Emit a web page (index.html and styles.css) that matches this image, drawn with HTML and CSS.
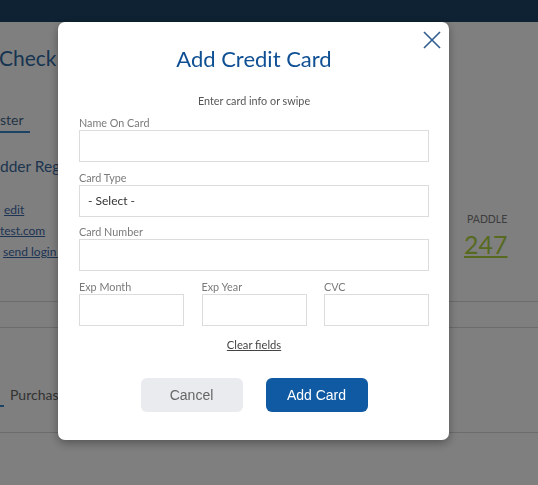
FILE: index.html
```html
<!DOCTYPE html>
<html lang="en">
<head>
    <meta charset="UTF-8">
    <title>Add Credit Card</title>
    <link rel="stylesheet" href="styles.css">
</head>
<body>
    <div class="page">
        <header class="topbar"></header>
        <div class="summary">
            <div class="summary-main">
                <h1 class="page-title">Check I</h1>
                <div class="tab-row">
                    <span class="tab active">ster</span>
                </div>
                <h2 class="section-title">dder Regi</h2>
                <div class="contact">
                    <a href="#" class="contact-link edit-link">edit</a>
                    <a href="#" class="contact-link">test.com</a>
                    <a href="#" class="contact-link send-link">send login li</a>
                </div>
            </div>
            <div class="paddle">
                <div class="paddle-label">PADDLE</div>
                <a href="#" class="paddle-number">247</a>
            </div>
        </div>
        <div class="band"></div>
        <div class="lower-tabs">
            <span class="lower-mark"></span>
            <span class="lower-tab">Purchase</span>
        </div>
    </div>

    <div class="overlay"></div>

    <div class="modal">
        <button class="modal-close" aria-label="Close">
            <svg width="18" height="18" viewBox="0 0 18 18">
                <path d="M1 1 L17 17 M17 1 L1 17" stroke="#2d5d8e" stroke-width="1.6" fill="none"/>
            </svg>
        </button>
        <h3 class="modal-title">Add Credit Card</h3>
        <p class="modal-hint">Enter card info or swipe</p>

        <div class="field">
            <label class="field-label">Name On Card</label>
            <input class="field-input" type="text">
        </div>
        <div class="field">
            <label class="field-label">Card Type</label>
            <div class="field-input field-select">- Select -</div>
        </div>
        <div class="field">
            <label class="field-label">Card Number</label>
            <input class="field-input" type="text">
        </div>
        <div class="field-row">
            <div class="field">
                <label class="field-label">Exp Month</label>
                <input class="field-input" type="text">
            </div>
            <div class="field">
                <label class="field-label">Exp Year</label>
                <input class="field-input" type="text">
            </div>
            <div class="field">
                <label class="field-label">CVC</label>
                <input class="field-input" type="text">
            </div>
        </div>

        <div class="clear-row">
            <a href="#" class="clear-link">Clear fields</a>
        </div>

        <div class="modal-actions">
            <button class="btn btn-cancel">Cancel</button>
            <button class="btn btn-primary">Add Card</button>
        </div>
    </div>
</body>
</html>
```

FILE: styles.css
```css
body {
    margin: 0;
    background: #ffffff;
    font-family: Lato, "Open Sans", sans-serif;
    overflow: hidden;
    width: 538px;
    height: 485px;
}

.page {
    width: 538px;
}

.topbar {
    height: 22px;
    background: #1c4466;
}

.summary {
    display: flex;
    height: 279px;
}

.summary-main {
    flex: 1;
    white-space: nowrap;
}

.page-title {
    margin: 22px 0 0 -1px;
    font-size: 21px;
    line-height: 28px;
    font-weight: 400;
    color: #2f6aa3;
}

.tab-row {
    margin-top: 37px;
}

.tab {
    display: inline-block;
    width: 30px;
    font-size: 14px;
    line-height: 18px;
    padding-bottom: 2px;
    color: #46698e;
    border-bottom: 2px solid #3a86c8;
}

.section-title {
    margin: 23px 0 0 0;
    font-size: 15.5px;
    line-height: 20px;
    font-weight: 400;
    color: #3a6a9e;
}

.contact {
    display: flex;
    flex-direction: column;
    gap: 4px;
    margin-top: 25px;
}

.contact-link {
    font-size: 12px;
    line-height: 17px;
    color: #3c68a8;
}

.edit-link {
    padding-left: 4px;
}

.send-link {
    padding-left: 3px;
}

.paddle {
    width: 74px;
    padding-top: 190px;
}

.paddle-label {
    font-size: 10.5px;
    line-height: 14px;
    color: #7a7a7a;
    padding-left: 3px;
}

.paddle-number {
    display: inline-block;
    margin-top: 3px;
    font-size: 25px;
    line-height: 30px;
    color: #aed43e;
}

.band {
    height: 25px;
    border-top: 1px solid #d8d8d8;
    border-bottom: 1px solid #d8d8d8;
}

.lower-tabs {
    height: 104px;
    border-bottom: 1px solid #d8d8d8;
    display: flex;
    align-items: flex-start;
}

.lower-mark {
    width: 4px;
    height: 2px;
    margin-top: 77px;
    background: #3a86c8;
}

.lower-tab {
    margin: 58px 0 0 6px;
    font-size: 14px;
    line-height: 18px;
    color: #666666;
}

.overlay {
    position: fixed;
    inset: 0;
    background: rgba(0, 0, 0, 0.5);
}

.modal {
    position: fixed;
    left: 58px;
    top: 22px;
    width: 391px;
    height: 418px;
    box-sizing: border-box;
    padding: 0 20px 0 21px;
    background: #ffffff;
    border-radius: 7px;
    box-shadow: 0 3px 10px rgba(0, 0, 0, 0.35);
}

.modal-close {
    position: absolute;
    top: 9px;
    right: 7px;
    width: 20px;
    height: 20px;
    padding: 0;
    border: none;
    background: none;
    cursor: pointer;
}

.modal-title {
    margin: 24px 0 0 0;
    text-align: center;
    font-size: 22px;
    line-height: 26px;
    font-weight: 400;
    color: #0f4f93;
}

.modal-hint {
    margin: 22px 0 0 0;
    text-align: center;
    font-size: 10.8px;
    line-height: 14px;
    color: #555555;
}

.field {
    display: flex;
    flex-direction: column;
    margin-top: 8.5px;
}

.modal-hint + .field {
    margin-top: 8px;
}

.field-label {
    font-size: 10.8px;
    line-height: 14px;
    color: #7a7a7a;
}

.field-input {
    box-sizing: border-box;
    height: 32px;
    width: 100%;
    margin: 0;
    border: 1px solid #dcdcdc;
    background: #ffffff;
    font-family: inherit;
}

.field-select {
    display: flex;
    align-items: center;
    padding-left: 8px;
    font-size: 12px;
    color: #333333;
}

.field-row {
    display: grid;
    grid-template-columns: 1fr 1fr 1fr;
    column-gap: 17.5px;
}

.clear-row {
    margin-top: 7px;
    text-align: center;
}

.clear-link {
    font-size: 11.2px;
    line-height: 14px;
    color: #444444;
}

.modal-actions {
    display: flex;
    justify-content: center;
    gap: 23px;
    margin-top: 26px;
}

.btn {
    width: 102px;
    height: 34px;
    border: none;
    border-radius: 6px;
    font-family: "Liberation Sans", Arial, sans-serif;
    font-size: 14px;
    cursor: pointer;
}

.btn-cancel {
    background: #e9ebee;
    color: #666666;
}

.btn-primary {
    background: #0f5aa2;
    color: #ffffff;
}
```
